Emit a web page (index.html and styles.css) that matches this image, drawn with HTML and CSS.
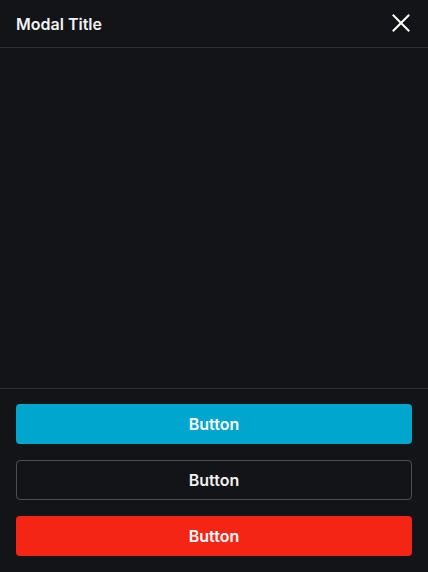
FILE: index.html
```html
<!DOCTYPE html>
<html lang="en">
<head>
    <meta charset="UTF-8">
    <meta name="viewport" content="width=device-width, initial-scale=1.0">
    <title>Modal</title>
    <link rel="stylesheet" href="styles.css">
</head>
<body>
    <section class="modal">
        <header class="modal-head">
            <h1 class="modal-title">Modal Title</h1>
            <button class="close" aria-label="Close">
                <svg width="18" height="18" viewBox="0 0 18 18" fill="none" stroke="#fff" stroke-width="2" stroke-linecap="square">
                    <path d="M1.5 1.5L16.5 16.5M16.5 1.5L1.5 16.5"/>
                </svg>
            </button>
        </header>
        <div class="modal-body"></div>
        <footer class="modal-foot">
            <button class="btn btn-primary">Button</button>
            <button class="btn btn-outline">Button</button>
            <button class="btn btn-danger">Button</button>
        </footer>
    </section>
</body>
</html>
```

FILE: styles.css
```css
*{margin:0; padding:0; box-sizing:border-box;}
html,body{height:100%;}
body{background:#131417; color:#fff; font-family:Inter, "Noto Sans", sans-serif;}

.modal{display:flex; flex-direction:column; height:100%;}
.modal-head{display:flex; align-items:center; justify-content:space-between; height:48px; padding:0 18px 0 16px; border-bottom:1px solid #2e3034;}
.modal-title{font-size:16px; font-weight:600; color:#f2f2f2;}
.close{display:flex; background:none; border:none; cursor:pointer; margin-top:-1px;}

.modal-body{flex:1;}

.modal-foot{display:flex; flex-direction:column; gap:16px; padding:15px 16px 16px; border-top:1px solid #2e3034;}
.btn{height:40px; border-radius:4px; border:none; font-family:inherit; font-size:16px; font-weight:600; color:#fff; cursor:pointer;}
.btn-primary{background:#00a6ce;}
.btn-outline{background:transparent; border:1px solid #4a5055; color:#f0f0f0;}
.btn-danger{background:#f52516;}
```
